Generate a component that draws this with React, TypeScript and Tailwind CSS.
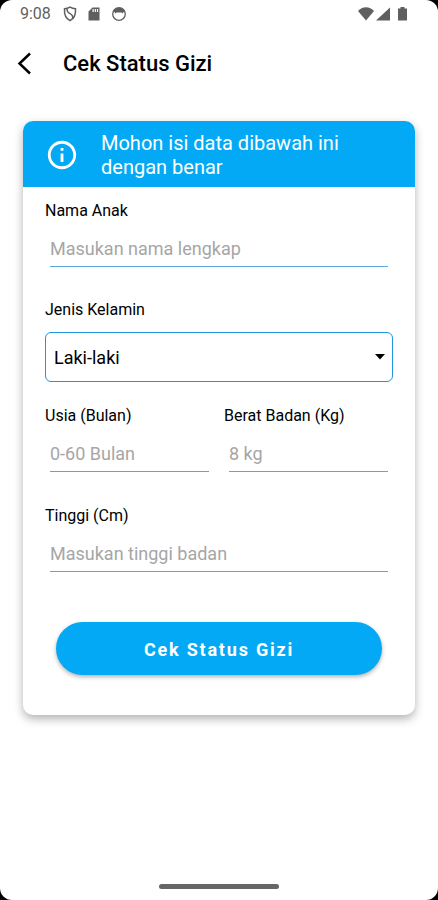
import type { InputHTMLAttributes } from "react";
import { MdInfoOutline } from "react-icons/md";

type FieldProps = InputHTMLAttributes<HTMLInputElement> & {
  id: string;
  label: string;
};

function Field({ id, label, ...props }: FieldProps) {
  return (
    <div className="flex min-w-0 flex-col">
      <label htmlFor={id} className="text-base leading-5">
        {label}
      </label>
      <input
        id={id}
        className="mx-[5px] mt-1 h-[42px] min-w-0 border-b border-[#5ba6de] bg-transparent pt-1.5 text-lg outline-none placeholder:text-[#a6a6a6]"
        {...props}
      />
    </div>
  );
}

function StatusBar() {
  return (
    <div className="flex h-7 items-center justify-between pr-[30px] pl-5 text-[#5f5f5f]">
      <div className="flex items-center">
        <span className="text-base leading-5">9:08</span>
        {/* shield */}
        <svg className="ml-[11px] h-4 w-4" fill="none" viewBox="0 0 16 16" stroke="currentColor" strokeWidth={1.5}>
          <path d="M8 1.200c1.800 1 3.500 1.500 5.500 1.500C13.900 8.300 12.500 12.300 8 14.700 3.500 12.300 2.100 8.300 2.500 2.700 4.500 2.700 6.200 2.200 8 1.200z" />
          <path d="M5 2.700C4.700 5.500 5.700 6.500 8 7.700c2.400 1.300 3.200 2.800 2.500 5" />
        </svg>
        {/* sd card */}
        <svg className="ml-[8px] h-4 w-4" viewBox="0 0 16 16" fill="currentColor">
          <path fillRule="evenodd" d="M6.500 1.500h7v13h-11v-9zM6.500 3v3h1.200V3zM8.700 3v3h1.200V3zM10.900 3v3h1.200V3z" />
        </svg>
        {/* face */}
        <svg className="ml-[9px] h-4 w-4" viewBox="0 0 16 16" fill="none">
          <circle cx="8" cy="8" r="6.300" stroke="currentColor" strokeWidth={1.3} />
          <path d="M3 4C5.500 1 10.500 1 13 4l.8 2.500-1.300-.5-.8 1.500L10.500 6.500h-5L4.300 7.500 3.500 6l-1.300.5z" fill="currentColor" />
        </svg>
      </div>
      <div className="flex items-center">
        {/* wifi */}
        <svg className="h-4 w-[18px]" viewBox="0 0 18 16" fill="currentColor">
          <path d="M1 5C3 2.700 6 1.300 9 1.300s6 1.400 8 3.700L9 14.500z" />
        </svg>
        {/* signal */}
        <svg className="h-4 w-4" viewBox="0 0 16 16" fill="currentColor">
          <path d="M15 1.500V14.500H1z" />
        </svg>
        {/* battery */}
        <svg className="ml-1.5 h-4 w-[11px]" viewBox="0 0 11 16" fill="currentColor">
          <path d="M3.500 1h4v1.500H10V14.500H1V2.500h2.500z" />
        </svg>
      </div>
    </div>
  );
}

export default function App() {
  return (
    <div className="min-h-screen bg-black font-[Roboto,sans-serif] text-black">
      <div className="flex min-h-screen flex-col rounded-xl bg-white">
        <StatusBar />

        <header className="flex h-[71px] items-center gap-[27px] px-4">
          <button type="button" aria-label="Kembali">
            <svg className="h-6 w-5" fill="none" viewBox="0 0 20 24" stroke="currentColor" strokeWidth={2.5}>
              <path d="M14 1.500L3.500 11.500 14 21.500" />
            </svg>
          </button>
          <h1 className="text-[22px] leading-7 font-medium">Cek Status Gizi</h1>
        </header>

        <main className="px-[23px] pt-[22px]">
          <form
            className="overflow-hidden rounded-[10px] bg-white shadow-[0_4px_10px_rgba(0,0,0,0.3)]"
            onSubmit={(e) => e.preventDefault()}
          >
            <div className="flex min-h-[66px] items-center gap-[22px] bg-[#03a9f4] px-[22px] pt-px text-white">
              <MdInfoOutline className="h-[34px] w-[34px] shrink-0" />
              <p className="max-w-[260px] text-xl leading-6">Mohon isi data dibawah ini dengan benar</p>
            </div>

            <div className="flex flex-col px-[22px] pt-[14px] pb-10">
              <Field id="nama" label="Nama Anak" placeholder="Masukan nama lengkap" />

              <div className="mt-[33px] flex flex-col">
                <label htmlFor="kelamin" className="text-base leading-5">
                  Jenis Kelamin
                </label>
                <div className="relative mt-3">
                  <select
                    id="kelamin"
                    className="h-[50px] w-full appearance-none rounded-md border border-[#1e96dc] bg-white px-2 pt-px text-lg outline-none"
                  >
                    <option>Laki-laki</option>
                    <option>Perempuan</option>
                  </select>
                  <svg
                    className="pointer-events-none absolute top-[22px] right-2 h-1.5 w-2.5"
                    viewBox="0 0 10 6"
                    fill="currentColor"
                  >
                    <path d="M0 0h10L5 5.500z" />
                  </svg>
                </div>
              </div>

              <div className="mt-6 grid grid-cols-2 gap-[10px]">
                <Field id="usia" label="Usia (Bulan)" placeholder="0-60 Bulan" inputMode="numeric" />
                <Field id="berat" label="Berat Badan (Kg)" placeholder="8 kg" inputMode="decimal" />
              </div>

              <div className="mt-[34px]">
                <Field id="tinggi" label="Tinggi (Cm)" placeholder="Masukan tinggi badan" inputMode="decimal" />
              </div>

              <button
                type="submit"
                className="mx-[11px] mt-[50px] h-[53px] rounded-full bg-[#03a9f4] pt-0.5 text-lg font-bold tracking-widest text-white shadow-[0_2px_4px_rgba(0,0,0,0.3)]"
              >
                Cek Status Gizi
              </button>
            </div>
          </form>
        </main>

        <div className="mt-auto flex justify-center pb-[11px]">
          <div className="h-[5px] w-[120px] rounded-full bg-[#666666]" />
        </div>
      </div>
    </div>
  );
}
